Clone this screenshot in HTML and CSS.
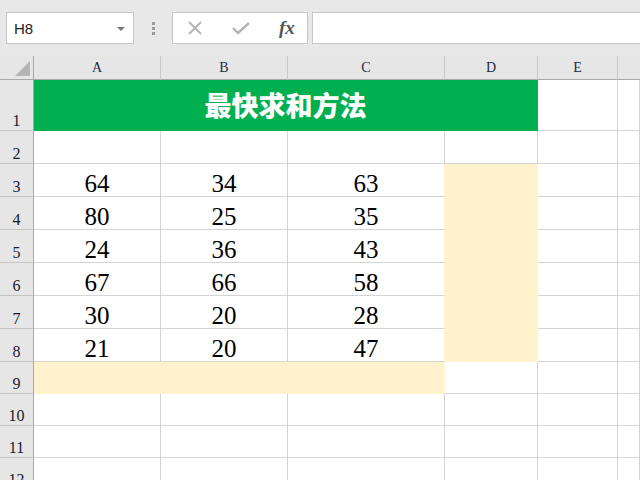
FILE: index.html
```html
<!DOCTYPE html>
<html>
<head>
<meta charset="utf-8">
<link rel="stylesheet" href="styles.css">
</head>
<body>
<div class="toolbar">
  <div class="namebox"><span class="ref">H8</span><span class="caret"></span></div>
  <div class="grip"><i></i><i></i><i></i></div>
  <div class="fbtns">
    <svg class="ic" width="16" height="16" viewBox="0 0 16 16"><path d="M2 2 L14 14 M14 2 L2 14" stroke="#b4b4b4" stroke-width="1.8" fill="none"/></svg>
    <svg class="ic" width="20" height="16" viewBox="0 0 20 16"><path d="M2 8 L7 13 L18 3" stroke="#b4b4b4" stroke-width="2.4" fill="none"/></svg>
    <span class="fx">fx</span>
  </div>
  <div class="finput"></div>
</div>
<div class="sheet">
  <div class="corner"><span class="tri"></span></div>
  <div class="ch">A</div><div class="ch">B</div><div class="ch">C</div><div class="ch">D</div><div class="ch">E</div><div class="ch last"></div>

  <div class="rh">1</div><div class="c title">最快求和方法</div><div class="c"></div><div class="c"></div>

  <div class="rh">2</div><div class="c"></div><div class="c"></div><div class="c"></div><div class="c"></div><div class="c"></div><div class="c"></div>

  <div class="rh">3</div><div class="c n">64</div><div class="c n">34</div><div class="c n yr">63</div><div class="c y"></div><div class="c"></div><div class="c"></div>
  <div class="rh">4</div><div class="c n">80</div><div class="c n">25</div><div class="c n yr">35</div><div class="c y"></div><div class="c"></div><div class="c"></div>
  <div class="rh">5</div><div class="c n">24</div><div class="c n">36</div><div class="c n yr">43</div><div class="c y"></div><div class="c"></div><div class="c"></div>
  <div class="rh">6</div><div class="c n">67</div><div class="c n">66</div><div class="c n yr">58</div><div class="c y"></div><div class="c"></div><div class="c"></div>
  <div class="rh">7</div><div class="c n">30</div><div class="c n">20</div><div class="c n yr">28</div><div class="c y"></div><div class="c"></div><div class="c"></div>
  <div class="rh">8</div><div class="c n">21</div><div class="c n">20</div><div class="c n yr">47</div><div class="c y"></div><div class="c"></div><div class="c"></div>

  <div class="rh">9</div><div class="c y"></div><div class="c y"></div><div class="c y"></div><div class="c"></div><div class="c"></div><div class="c"></div>
  <div class="rh">10</div><div class="c"></div><div class="c"></div><div class="c"></div><div class="c"></div><div class="c"></div><div class="c"></div>
  <div class="rh">11</div><div class="c"></div><div class="c"></div><div class="c"></div><div class="c"></div><div class="c"></div><div class="c"></div>
  <div class="rh">12</div><div class="c"></div><div class="c"></div><div class="c"></div><div class="c"></div><div class="c"></div><div class="c"></div>
</div>
</body>
</html>
```
FILE: styles.css
```css
html, body {
  margin: 0;
  padding: 0;
  width: 640px;
  height: 480px;
  overflow: hidden;
  background: #ffffff;
}
* { box-sizing: border-box; }

.toolbar {
  height: 56px;
  background: #e8e8e8;
  display: flex;
  align-items: flex-start;
  padding: 12px 0 0 6px;
}
.namebox {
  width: 128px;
  height: 32px;
  background: #fff;
  border: 1px solid #c6c6c6;
  display: flex;
  align-items: center;
  justify-content: space-between;
  padding: 0 8px 0 7px;
}
.ref {
  font-family: "Liberation Sans", Arial, sans-serif;
  font-size: 15px;
  color: #222;
}
.caret {
  width: 0;
  height: 0;
  border-left: 4px solid transparent;
  border-right: 4px solid transparent;
  border-top: 4px solid #777;
  margin-top: 1px;
}
.grip {
  width: 38px;
  height: 32px;
  display: flex;
  flex-direction: column;
  align-items: center;
  justify-content: center;
  gap: 2px;
}
.grip i {
  display: block;
  width: 3px;
  height: 3px;
  background: #9c9c9c;
}
.fbtns {
  width: 136px;
  height: 32px;
  background: #fff;
  border: 1px solid #c6c6c6;
  display: flex;
  align-items: center;
  padding: 0 0 0 14px;
  gap: 28px;
}
.fbtns .ic { display: block; }
.fx {
  font-family: "Liberation Serif", "Times New Roman", serif;
  font-style: italic;
  font-weight: bold;
  font-size: 19px;
  color: #555;
}
.finput {
  margin-left: 4px;
  flex: 1;
  height: 32px;
  background: #fff;
  border: 1px solid #c6c6c6;
  border-right: none;
}

.sheet {
  display: grid;
  grid-template-columns: 34px 127px 127px 157px 93px 80px 1fr;
  grid-template-rows: 24px 51px repeat(7, 33px) repeat(4, 32px);
}
.corner {
  background: #e6e6e6;
  border-right: 1px solid #a8a8a8;
  border-bottom: 1px solid #a8a8a8;
  position: relative;
}
.tri {
  position: absolute;
  right: 3px;
  bottom: 3px;
  width: 0;
  height: 0;
  border-left: 15px solid transparent;
  border-bottom: 15px solid #b4b4b4;
}
.ch {
  background: #e6e6e6;
  border-right: 1px solid #c9c9c9;
  border-bottom: 1px solid #a8a8a8;
  display: flex;
  align-items: flex-end;
  justify-content: center;
  padding-bottom: 4px;
  font-family: "Liberation Serif", "Times New Roman", serif;
  font-size: 14px;
  line-height: 14px;
  color: #1f2a44;
}
.ch.last { border-right: none; }
.rh {
  background: #e6e6e6;
  border-right: 1px solid #a8a8a8;
  border-bottom: 1px solid #c4c4c4;
  display: flex;
  align-items: flex-end;
  justify-content: center;
  padding-bottom: 1px;
  font-family: "Liberation Serif", "Times New Roman", serif;
  font-size: 16px;
  line-height: 16px;
  color: #1a1a2a;
}
.c {
  background: #fff;
  border-right: 1px solid #d4d4d4;
  border-bottom: 1px solid #d4d4d4;
}
.n {
  display: flex;
  align-items: flex-end;
  justify-content: center;
  font-family: "Liberation Serif", "Times New Roman", serif;
  font-size: 25px;
  line-height: 25px;
  color: #000;
}
.title {
  grid-column: span 4;
  background: #00b050;
  border-color: #00b050;
  display: flex;
  align-items: center;
  justify-content: center;
  font-family: "Noto Sans CJK SC", "Noto Sans", sans-serif;
  font-weight: 900;
  font-size: 27px;
  color: #fff;
  padding-bottom: 2px;
}
.y {
  background: #fff2cc;
  border-color: #fff2cc;
}
.yr { border-right-color: #fff2cc; }
```
